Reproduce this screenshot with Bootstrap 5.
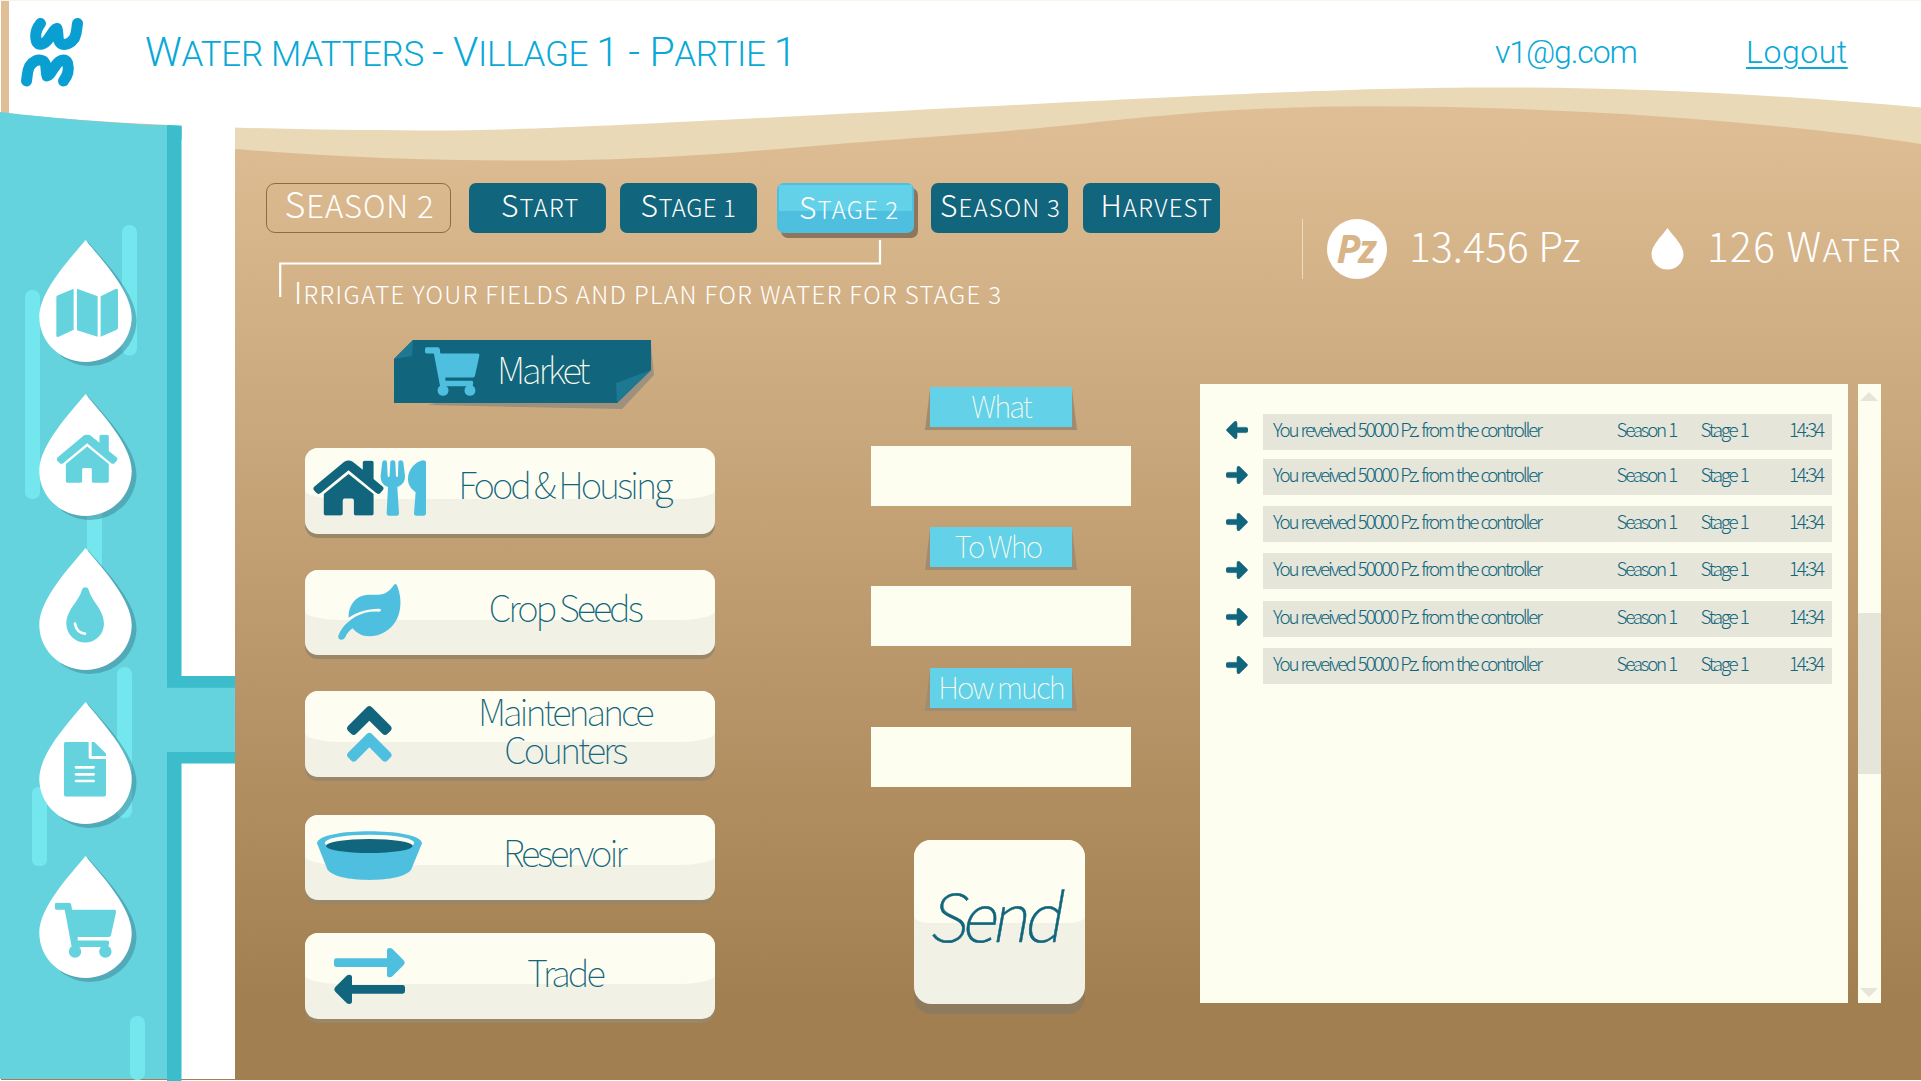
<!DOCTYPE html>
<html lang="en">
<head>
<meta charset="utf-8">
<title>Water matters</title>
<link rel="stylesheet" href="https://cdn.jsdelivr.net/npm/bootstrap@5.3.0/dist/css/bootstrap.min.css">
<style>
body{width:1921px;height:1081px;overflow:hidden;background:#fff;font-family:"Noto Sans CJK SC","Open Sans",sans-serif;font-weight:300}
svg{display:block;flex:none}
.scene{z-index:0}
.page{z-index:1;width:1921px;height:1081px}
.topbar{height:105px;padding-left:20px;font-family:Roboto,sans-serif;color:#08a9d6;line-height:40px;font-size:32px}
.title{margin:22px 0 0 62px;width:1350px;font-size:35px;line-height:60px;letter-spacing:-.34px;font-weight:300;text-transform:uppercase}
.title b{font-weight:300;font-size:41px}
.user{margin-top:32px;width:251px;letter-spacing:-1.1px}
.logout{margin-top:32px;letter-spacing:.55px;color:inherit;text-decoration:underline;text-underline-offset:4px;text-decoration-thickness:2px}
.side{width:235px;padding:135px 0 0 39px}
.side a{height:154px}
.upper{height:235px;padding-left:31px}
.stages{margin-top:78px}
.stage{height:50px;width:137px;border-radius:7px;background:#11657c;color:#fff;font-size:24px;font-weight:300;line-height:36px;text-transform:uppercase;letter-spacing:1.15px;text-align:left;white-space:nowrap;padding:0 0 5px}
.stage::first-letter,.hint::first-letter{font-size:30px}
.season{height:50px;width:184.5px;border:1.5px solid #8f6c3c;border-radius:9px;color:#fff;font-size:31px;line-height:37px;letter-spacing:.9px;text-transform:uppercase;padding-left:17.5px;margin-right:18.5px}
.season::first-letter{font-size:36px}
.stage.now{background:linear-gradient(#63d1e7,#63d1e7) 2px 2px/133px 26px no-repeat,#4fbfe0;box-shadow:4px 5px 0 #8c765c;padding-bottom:1px}
.hint{font-size:24px;line-height:40px;color:#fff;text-transform:uppercase;letter-spacing:1.38px;margin:-26px 0 0 28px;white-space:nowrap}
.stats{margin-top:114px;height:60px;color:#fff;font-size:40.5px;line-height:60px;white-space:nowrap}
.rule{width:1px;height:60px;background:#eadcc6}
.coin{width:60px;height:60px;border-radius:50%;background:#fff;color:#d7b589;font:italic 700 39px/58px "Noto Sans",sans-serif;letter-spacing:-2px;margin-left:24px;padding-right:3px}
.amount{margin-top:-4px}
.water{font-size:32px;text-transform:uppercase}
.lower{padding-left:69.5px}
.menu{width:410.5px}
.market{width:261px;height:64px;margin-left:89px}
.market span{color:#fdfdf0;font-size:36.5px;font-weight:100;letter-spacing:-3.08px;line-height:57px;left:103.500px;top:0}
.tile{height:85.5px;width:410.5px;border:0;padding:0;border-radius:13px;color:#11657c;font-size:36.5px;line-height:38px;font-weight:100;letter-spacing:-3.07px;background:#f1f1e5;box-shadow:0 4px 0 #998768;overflow:visible}
.tile::before,.send::before{content:"";position:absolute;left:0;top:0;right:0;height:50.5px;background:#fdfdf1;border-radius:13px 13px 35px 35px/13px 13px 9px 9px}
.tile>*{position:relative}
.pict{width:129px}
.cap{padding-right:19px}
.ask{width:260px;padding-top:47px;margin-left:156px}
.tag{width:142px;height:40px;background:#63d1e7;color:#fdfdf0;font-size:29.5px;font-weight:100;line-height:36px;letter-spacing:-1.93px;margin-left:59px}
.tag::before{content:"";position:absolute;z-index:-1;left:-5px;top:2px;width:152px;height:41px;background:#9f8c71;clip-path:polygon(5px 0,147px 0,152px 100%,0 100%)}
.entry{height:60px;width:260px;margin-top:19px;border:0;border-radius:0;background:#fdfdf0!important}
.send{width:171.5px;height:163.5px;margin:53px 0 0 42.5px;border:0;padding:0 0 18px 14px;border-radius:17px;background:#f1f1e5;box-shadow:0 10px 0 #8e7b5e;color:#11657c;font-size:66px;line-height:80px;font-weight:100;letter-spacing:-5.3px}
.send::before{height:82.5px;border-radius:17px 17px 15px 15px/17px 17px 7px 7px}
.send span{position:relative;display:block;transform:skewX(-10deg);transform-origin:0 69px;-webkit-text-stroke:.5px #11657c}
.log{width:648px;height:619px;background:#fdfdf0;margin:44px 0 0 69px;padding:29.7px 16px 0 26px;color:#11657c;font-size:18.8px;line-height:30px;letter-spacing:-2.2px;word-spacing:1.3px}
.line{height:36px;background:#e5e5da;padding-left:10px;white-space:nowrap}
.scroller{width:23.8px;height:619px;background:#fdfdf0;margin:44px 0 0 9.5px;padding:8px 0 6px}
.thumb{height:161px;background:#e5e5da;margin-top:212px}
</style>
</head>
<body>
<svg width="0" height="0" class="position-absolute" aria-hidden="true">
<defs>
<symbol id="house" viewBox="170 704 184 145" preserveAspectRatio="none"><path d="M262 704Q268 704 273 708L299 729V710Q299 705 304 705H322Q327 705 327 710V753L351 773Q355 778 350 783L344 790Q339 794 333 789L262 730L191 789Q185 794 180 790L173 783Q169 778 173 773L251 708Q256 704 262 704ZM262 740L327 792V843Q327 848 322 848H281Q276 848 276 843V809Q276 804 271 804H252Q247 804 247 809V843Q247 848 242 848H203Q198 848 198 843V792Z"/></symbol>
<symbol id="cart" viewBox="164 848 186 166" preserveAspectRatio="none"><path d="M170 849H207Q213 849 214 856L216 870H343Q349 870 348 877L333 945Q332 951 326 951H233V962H321Q328 962 327 970L325 981H215L194 870H170Q164 870 164 864V855Q164 849 170 849Z"/><circle cx="225" cy="995" r="18.500"/><circle cx="316" cy="995" r="18.500"/></symbol>
<symbol id="arrow" viewBox="0 0 21 17"><path d="M2 6H10.500V2Q10.500-.5 12.800.5L20 7.500Q21 8.500 20 9.500L12.800 16.500Q10.500 17.500 10.500 15V11H2Q0 11 0 9V8Q0 6 2 6Z"/></symbol>
<symbol id="dropbase" viewBox="0 0 98 128"><path d="M49 2C68 24 97.500 54 97.500 81A47 46 0 0 1 51 126C40 126 30 122 22 116Z" fill="#366e82" fill-opacity=".4"/><path d="M46.500 0C31 19 .3 51 .3 77A46.200 45 0 0 0 92.700 77C92.700 51 62 19 46.500 0Z" fill="#fff"/></symbol>
</defs>
</svg>

<svg class="scene position-absolute top-0 start-0" width="1921" height="1081" viewBox="0 0 1921 1081">
<defs><linearGradient id="soil" x1="0" y1="100" x2="0" y2="1005" gradientUnits="userSpaceOnUse"><stop offset="0" stop-color="#e1bf96"/><stop offset="1" stop-color="#a17f50"/></linearGradient></defs>
<path d="M1 1H1921V1080H1Z" fill="url(#soil)"/>
<path d="M181 115H235V1079H181Z" fill="#fff"/>
<path d="M0 125H167V1079H0Z" fill="#64d3de"/>
<path d="M167 125H181.500V1081H167Z" fill="#3bbdcb"/>
<path d="M167 676H235V763.500H167Z" fill="#3bbdcb"/><path d="M166 687.700H235V752H166Z" fill="#64d3de"/>
<g fill="#74e6ee"><rect x="122" y="225" width="15" height="130.500" rx="7"/><rect x="25" y="290" width="15" height="209" rx="7"/><rect x="87" y="490" width="15" height="100" rx="7"/><rect x="117" y="667" width="15" height="151" rx="7"/><rect x="32" y="787" width="15" height="79" rx="6"/><rect x="130" y="1016" width="15" height="64" rx="7"/></g>
<path d="M235 100V149C330 157 430 160.500 520 160.500C640 160.500 720 154 820 145.500C920 137 980 134 1060 126C1150 117 1230 106.500 1370 106.300C1560 106 1780 122 1921 144V50H235Z" fill="#e9d9b6"/>
<path d="M9 1H1921V107.500C1770 94 1630 87 1480 87.500C1330 88 1150 98 820 115C640 124 520 131 420 130.500C300 130 130 127 9 113.500Z" fill="#fff"/>
<path d="M0 112C50 118 110 123 181.500 126.500V135H0Z" fill="#64d3de"/><path d="M167 125.500L181.500 126.500V140H167Z" fill="#3bbdcb"/>
<path d="M0 .5H1921" stroke="#faf3ea"/>
</svg>

<div class="page position-relative d-flex flex-column">
<header class="topbar d-flex align-items-start">
<svg width="63" height="105" viewBox="20 0 63 105" fill="none" stroke="#0a9fd3" stroke-width="11" stroke-linecap="round" stroke-linejoin="round"><path id="w" d="M40.500 23.500C36 29 35 36 36.500 41.500C38 46 44 45 48 39.500C52 34 54 29 57 28.500C58.500 33 57 41 61 43.500C66 46 71 43 74.500 38C77 33 76.500 29 77.500 23.500"/><use href="#w" transform="rotate(180 52 52.200)"/></svg>
<h1 class="title mb-0"><b>W</b>ater matters <b>- V</b>illage <b>1 - P</b>artie <b>1</b></h1>
<span class="user">v1@g.com</span>
<a class="logout" href="#">Logout</a>
</header>

<div class="d-flex flex-grow-1">
<nav class="side d-flex flex-column flex-shrink-0">
<a href="#" title="Map"><svg width="98" height="128"><use href="#dropbase"/><svg x="17" y="48.500" width="62.300" height="49" viewBox="168 266 187 147" fill="#64d3de"><path d="M169 292Q169 289 172 287L221 267V390L176 411Q169 413 169 407ZM231 267L293 289V411L231 391ZM302 289L348 267Q354 266 354 271V386L350 390L302 411Z"/></svg></svg></a>
<a href="#" title="Housing"><svg width="98" height="128"><use href="#dropbase"/><use href="#house" x="17.500" y="40.500" width="61.300" height="48.500" fill="#64d3de"/></svg></a>
<a href="#" title="Water"><svg width="98" height="128"><use href="#dropbase"/><svg x="27" y="39" width="38.300" height="55.700" viewBox="198 1160 115 167" fill="#64d3de"><path d="M246 1168Q248 1161 256 1161Q264 1161 266 1168C276 1205 312 1228 312 1270A56.500 57 0 0 1 199 1270C199 1228 236 1205 246 1168Z"/><path d="M225 1270Q229 1297 255 1300" fill="none" stroke="#fff" stroke-width="8" stroke-linecap="round"/></svg></svg></a>
<a href="#" title="Documents"><svg width="98" height="128"><use href="#dropbase"/><svg x="25" y="39.700" width="42.300" height="55" viewBox="193 365 127 165" fill="#64d3de"><path d="M193 371Q193 366 198 366H267V411Q267 417 272 417H319V524Q319 530 313 530H199Q193 530 193 524ZM276 366H284L319 400V408H276Z"/><path d="M229 442H282M229 463H282M229 483H282" stroke="#fff" stroke-width="8" stroke-linecap="round"/></svg></svg></a>
<a href="#" title="Market"><svg width="98" height="128"><use href="#dropbase"/><use href="#cart" x="15.700" y="46.500" width="62" height="55.500" fill="#64d3de"/></svg></a>
</nav>

<main class="flex-grow-1">
<div class="upper d-flex">
<div style="width:1035px">
<div class="stages d-flex">
<div class="season">Season 2</div>
<button class="stage border-0" style="padding-left:32px">Start</button>
<button class="stage border-0" style="margin-left:14px;padding-left:20.500px;letter-spacing:.5px">Stage 1</button>
<button class="stage now border-0" style="margin-left:20px;padding-left:22px">Stage 2</button>
<button class="stage border-0" style="margin-left:17px;padding-left:9px">Season 3</button>
<button class="stage border-0" style="margin-left:15px;padding-left:17.500px">Harvest</button>
</div>
<svg width="603" height="57" viewBox="0 0 603 57" fill="none" stroke="#fff" stroke-width="2.200" style="margin:7px 0 0 13px"><path d="M1.200 57V23.500H601V0"/></svg>
<p class="hint">Irrigate your fields and plan for water for stage 3</p>
</div>
<div class="stats d-flex">
<div class="rule" style="margin-left:1px"></div>
<div class="coin text-center">Pz</div>
<div class="amount" style="margin-left:22px;width:242px;letter-spacing:.25px">13.456 Pz</div>
<svg width="34" height="42" viewBox="0 0 34 42" style="margin-top:9px"><path d="M16.500 0C11 8 .5 17 .5 26A16 15.500 0 0 0 32.500 26C32.500 17 22 8 16.500 0Z" fill="#fff"/></svg>
<div class="amount" style="margin-left:22px;letter-spacing:1.400px">126 W<span class="water">ater</span></div>
</div>
</div>

<div class="lower d-flex align-items-start">
<div class="menu">
<div class="market position-relative">
<svg width="264" height="72" viewBox="0 0 264 72"><path d="M257 4L260 35L228 69L34 65Z" fill="#66727a" fill-opacity=".45"/><path d="M19 0H257V30L223 63H0V19Z" fill="#11657c"/><path d="M19 0L18 16L0 19ZM222 43L257 30L223 63Z" fill="#1d7893"/><use href="#cart" x="31" y="7" width="55" height="49" fill="#4fbfe0"/></svg>
<span class="position-absolute">Market</span>
</div>
<button class="tile d-flex align-items-center position-relative" style="margin-top:44px"><span class="pict" style="padding-bottom:5px"><svg width="129" height="56" viewBox="0 0 129 56"><use href="#house" x="8" y=".3" width="71" height="55.500" fill="#11657c"/><path transform="translate(-15 -30.300) scale(.3333)" fill="#4fbfe0" d="M277 97Q278 92 284 92Q291 92 291 98L293 138Q293 142 296 142Q299 142 299 138L301 98Q301 92 308 92Q316 92 316 98L318 138Q318 142 321 142Q324 142 324 138L325 98Q325 92 332 92Q339 92 340 98L345 138C346 160 332 168 322 172L327 250Q327 258 320 258H297Q290 258 290 250L294 172C284 168 271 160 272 138ZM400 92Q408 92 408 100V250Q408 258 400 258H379Q372 258 372 250L377 188C365 178 354 168 354 148C354 120 376 95 400 92Z"/></svg></span><span class="cap flex-grow-1" style="padding-bottom:14px;padding-right:20px">Food &amp; Housing</span></button>
<button class="tile d-flex align-items-center position-relative" style="margin-top:36px"><span class="pict"><svg width="129" height="56" viewBox="45 463 387 168" fill="#4fbfe0"><path d="M316 463Q319 463 322 470C334 500 335 535 322 566C305 602 270 620 238 620C215 620 200 610 188 596C178 602 170 612 165 624Q160 631 152 630Q143 628 145 618C155 590 185 560 225 549Q250 544 268 546Q273 545 273 541Q272 537 266 537C230 537 200 548 176 564C174 535 190 508 215 499Q228 495 240 495H265C285 495 300 482 310 468Q313 463 316 463Z"/></svg></span><span class="cap flex-grow-1" style="padding-bottom:11px">Crop Seeds</span></button>
<button class="tile d-flex align-items-center position-relative" style="margin-top:36px"><span class="pict"><svg width="129" height="56" viewBox="45 108 387 168"><path fill="#11657c" d="M231 111Q238 105 245 111L302 168Q308 175 302 182L292 192Q285 198 278 192L238 152L198 192Q191 198 184 192L174 182Q168 175 174 168Z"/><path fill="#4fbfe0" transform="translate(0 80)" d="M231 111Q238 105 245 111L302 168Q308 175 302 182L292 192Q285 198 278 192L238 152L198 192Q191 198 184 192L174 182Q168 175 174 168Z"/></svg></span><span class="cap flex-grow-1" style="padding-bottom:7px">Maintenance<br>Counters</span></button>
<button class="tile d-flex align-items-center position-relative" style="margin-top:38px"><span class="pict" style="padding-bottom:4px"><svg width="129" height="49" viewBox="45 483 387 147"><path fill="#4fbfe0" d="M81 520C85 495 160 484 238 484C316 484 391 495 396 520L364 598C352 619 300 630 238 630C176 630 125 619 112 598Z"/><ellipse cx="238.500" cy="519" rx="134" ry="25" fill="#fdfdf1"/><ellipse cx="238" cy="528" rx="130" ry="21" fill="#11657c"/></svg></span><span class="cap flex-grow-1" style="padding-bottom:11px;padding-right:21px">Reservoir</span></button>
<button class="tile d-flex align-items-center position-relative" style="margin-top:33px"><span class="pict"><svg width="129" height="56" viewBox="45 838 387 168"><path fill="#4fbfe0" d="M139 869H291V846Q291 838 299 838Q304 838 308 842L341 875Q347 882 341 889L308 922Q304 926 299 926Q291 926 291 918V895H139Q132 895 132 888V876Q132 869 139 869Z"/><path fill="#11657c" transform="rotate(180 238.500 922)" d="M139 869H291V846Q291 838 299 838Q304 838 308 842L341 875Q347 882 341 889L308 922Q304 926 299 926Q291 926 291 918V895H139Q132 895 132 888V876Q132 869 139 869Z"/></svg></span><span class="cap flex-grow-1" style="padding-bottom:7px">Trade</span></button>
</div>

<form class="ask">
<div class="tag position-relative text-center">What</div>
<input class="entry form-control" aria-label="What">
<div class="tag position-relative text-center" style="margin-top:21px;padding-right:6px">To Who</div>
<input class="entry form-control" aria-label="To who">
<div class="tag position-relative text-center" style="margin-top:22px">How much</div>
<input class="entry form-control" aria-label="How much">
<button type="button" class="send d-block position-relative text-start"><span>Send</span></button>
</form>

<div class="log" id="log"></div>
<div class="scroller d-flex flex-column align-items-center">
<svg width="18" height="9"><path d="M9 0L18 9H0Z" fill="#e5e5da"/></svg>
<div class="thumb w-100"></div>
<svg class="mt-auto" width="18" height="9"><path d="M9 9L18 0H0Z" fill="#e5e5da"/></svg>
</div>
</div>
</main>
</div>
</div>
<script>
const gaps=[0,9,11,11.5,11.5,11.5];
document.getElementById('log').innerHTML=gaps.map((g,i)=>`<div class="d-flex align-items-center" style="margin-top:${g}px"><svg width="22" height="18" viewBox="0 0 21 17" fill="#11657c" stroke="#11657c" stroke-width=".6" overflow="visible" style="margin:0 15px 3px 0"><use href="#arrow" width="21" height="17"${i?'':' transform="rotate(180 10.5 8.5)"'}/></svg><div class="line d-flex flex-grow-1"><span style="width:343.5px">You reveived 50000 Pz. from the controller</span><span style="width:84px">Season 1</span><span style="width:88.5px">Stage 1</span><span>14:34</span></div></div>`).join('');
</script>
<script src="https://cdn.jsdelivr.net/npm/bootstrap@5.3.0/dist/js/bootstrap.bundle.min.js"></script>
</body>
</html>
